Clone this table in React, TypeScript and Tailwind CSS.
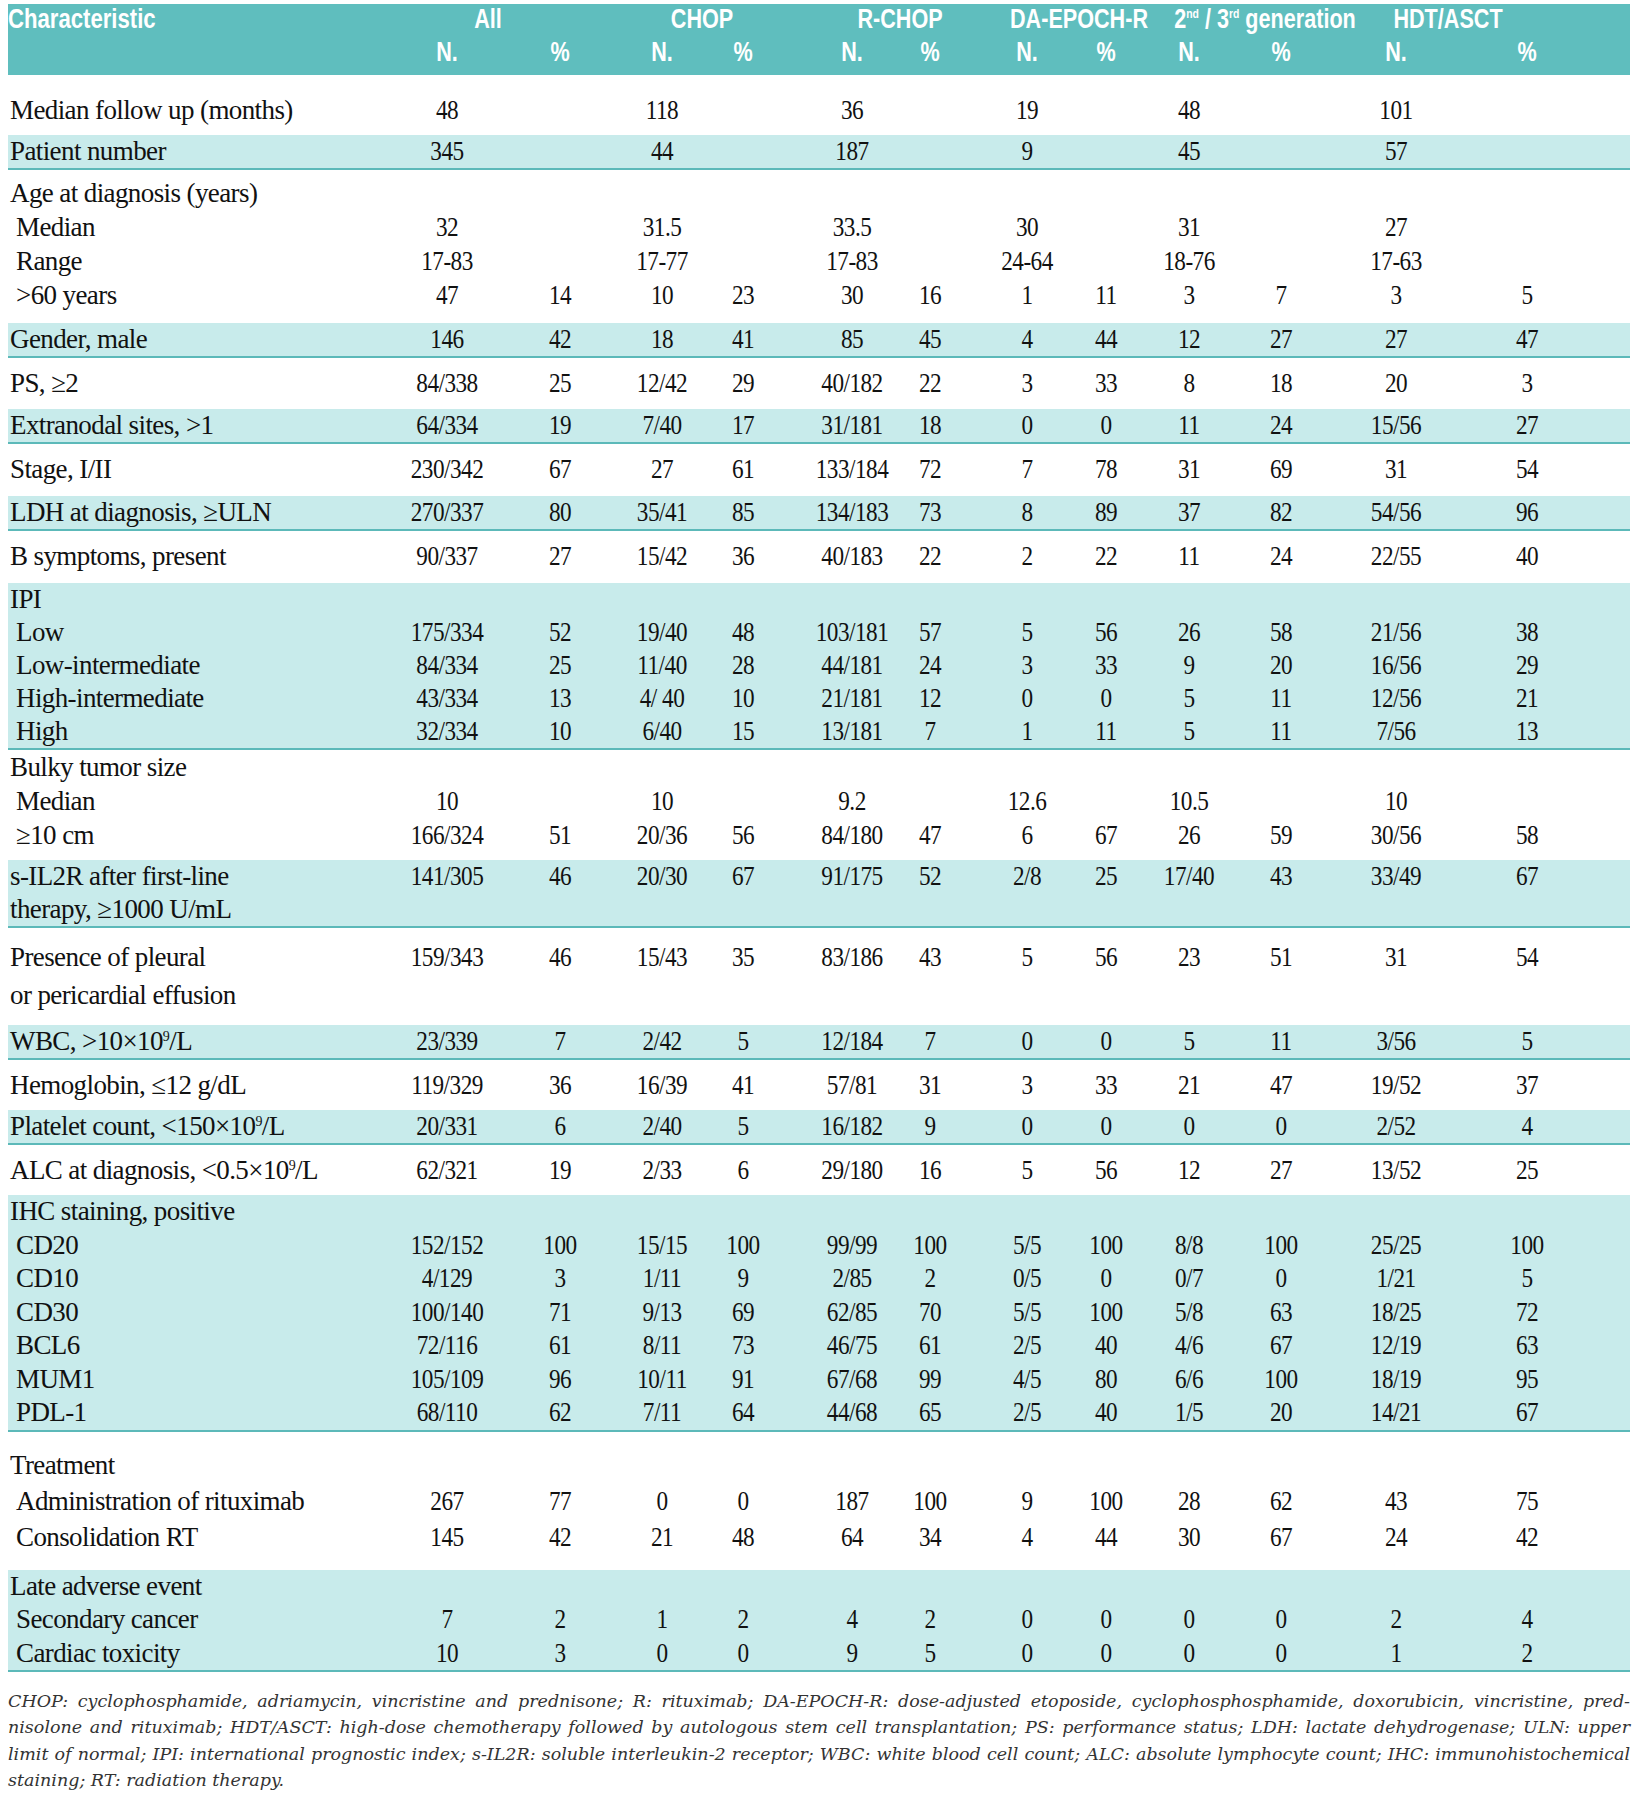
import React from 'react';

type Row = { label: React.ReactNode; sub?: boolean; values?: string[] };
type Group = { teal?: boolean; box: string; rows: Row[] };

// column left edges sit on the centre of each value column
const COLS =
  'grid grid-cols-[439px_113px_102px_81px_109px_78px_97px_79px_83px_92px_115px_131px_1fr]';

const E = ['', '', '', '', '', '', '', '', '', '', '', ''];

const Nine = () => <sup className="text-[14px] -top-[9px]">9</sup>;

const groups: Group[] = [
  { box: 'pt-[18px] pb-[8px] leading-[34px]', rows: [{ label: 'Median follow up (months)', values: ['48', '', '118', '', '36', '', '19', '', '48', '', '101', ''] }] },
  { teal: true, box: 'leading-[33px]', rows: [{ label: 'Patient number', values: ['345', '', '44', '', '187', '', '9', '', '45', '', '57', ''] }] },
  {
    box: 'pt-[6px] pb-[11px] leading-[34px]',
    rows: [
      { label: 'Age at diagnosis (years)' },
      { label: 'Median', sub: true, values: ['32', '', '31.5', '', '33.5', '', '30', '', '31', '', '27', ''] },
      { label: 'Range', sub: true, values: ['17-83', '', '17-77', '', '17-83', '', '24-64', '', '18-76', '', '17-63', ''] },
      { label: '>60 years', sub: true, values: ['47', '14', '10', '23', '30', '16', '1', '11', '3', '7', '3', '5'] },
    ],
  },
  { teal: true, box: 'leading-[33px]', rows: [{ label: 'Gender, male', values: ['146', '42', '18', '41', '85', '45', '4', '44', '12', '27', '27', '47'] }] },
  { box: 'py-[9px] leading-[33px]', rows: [{ label: 'PS, ≥2', values: ['84/338', '25', '12/42', '29', '40/182', '22', '3', '33', '8', '18', '20', '3'] }] },
  { teal: true, box: 'leading-[33px]', rows: [{ label: 'Extranodal sites, >1', values: ['64/334', '19', '7/40', '17', '31/181', '18', '0', '0', '11', '24', '15/56', '27'] }] },
  { box: 'pt-[9px] pb-[10px] leading-[33px]', rows: [{ label: 'Stage, I/II', values: ['230/342', '67', '27', '61', '133/184', '72', '7', '78', '31', '69', '31', '54'] }] },
  { teal: true, box: 'leading-[33px]', rows: [{ label: 'LDH at diagnosis, ≥ULN', values: ['270/337', '80', '35/41', '85', '134/183', '73', '8', '89', '37', '82', '54/56', '96'] }] },
  { box: 'pt-[9px] pb-[10px] leading-[33px]', rows: [{ label: 'B symptoms, present', values: ['90/337', '27', '15/42', '36', '40/183', '22', '2', '22', '11', '24', '22/55', '40'] }] },
  {
    teal: true,
    box: 'leading-[33px]',
    rows: [
      { label: 'IPI' },
      { label: 'Low', sub: true, values: ['175/334', '52', '19/40', '48', '103/181', '57', '5', '56', '26', '58', '21/56', '38'] },
      { label: 'Low-intermediate', sub: true, values: ['84/334', '25', '11/40', '28', '44/181', '24', '3', '33', '9', '20', '16/56', '29'] },
      { label: 'High-intermediate', sub: true, values: ['43/334', '13', '4/ 40', '10', '21/181', '12', '0', '0', '5', '11', '12/56', '21'] },
      { label: 'High', sub: true, values: ['32/334', '10', '6/40', '15', '13/181', '7', '1', '11', '5', '11', '7/56', '13'] },
    ],
  },
  {
    box: 'pb-[8px] leading-[34px]',
    rows: [
      { label: 'Bulky tumor size' },
      { label: 'Median', sub: true, values: ['10', '', '10', '', '9.2', '', '12.6', '', '10.5', '', '10', ''] },
      { label: '≥10 cm', sub: true, values: ['166/324', '51', '20/36', '56', '84/180', '47', '6', '67', '26', '59', '30/56', '58'] },
    ],
  },
  {
    teal: true,
    box: 'leading-[33px]',
    rows: [
      { label: 's-IL2R after first-line', values: ['141/305', '46', '20/30', '67', '91/175', '52', '2/8', '25', '17/40', '43', '33/49', '67'] },
      { label: 'therapy, ≥1000 U/mL' },
    ],
  },
  {
    box: 'pt-[10px] pb-[11px] leading-[38px]',
    rows: [
      { label: 'Presence of pleural', values: ['159/343', '46', '15/43', '35', '83/186', '43', '5', '56', '23', '51', '31', '54'] },
      { label: 'or pericardial effusion' },
    ],
  },
  { teal: true, box: 'leading-[33px]', rows: [{ label: <>WBC, &gt;10×10<Nine />/L</>, values: ['23/339', '7', '2/42', '5', '12/184', '7', '0', '0', '5', '11', '3/56', '5'] }] },
  { box: 'py-[8px] leading-[34px]', rows: [{ label: 'Hemoglobin, ≤12 g/dL', values: ['119/329', '36', '16/39', '41', '57/81', '31', '3', '33', '21', '47', '19/52', '37'] }] },
  { teal: true, box: 'leading-[33px]', rows: [{ label: <>Platelet count, &lt;150×10<Nine />/L</>, values: ['20/331', '6', '2/40', '5', '16/182', '9', '0', '0', '0', '0', '2/52', '4'] }] },
  { box: 'py-[8px] leading-[34px]', rows: [{ label: <>ALC at diagnosis, &lt;0.5×10<Nine />/L</>, values: ['62/321', '19', '2/33', '6', '29/180', '16', '5', '56', '12', '27', '13/52', '25'] }] },
  {
    teal: true,
    box: 'leading-[33.5px]',
    rows: [
      { label: 'IHC staining, positive' },
      { label: 'CD20', sub: true, values: ['152/152', '100', '15/15', '100', '99/99', '100', '5/5', '100', '8/8', '100', '25/25', '100'] },
      { label: 'CD10', sub: true, values: ['4/129', '3', '1/11', '9', '2/85', '2', '0/5', '0', '0/7', '0', '1/21', '5'] },
      { label: 'CD30', sub: true, values: ['100/140', '71', '9/13', '69', '62/85', '70', '5/5', '100', '5/8', '63', '18/25', '72'] },
      { label: 'BCL6', sub: true, values: ['72/116', '61', '8/11', '73', '46/75', '61', '2/5', '40', '4/6', '67', '12/19', '63'] },
      { label: 'MUM1', sub: true, values: ['105/109', '96', '10/11', '91', '67/68', '99', '4/5', '80', '6/6', '100', '18/19', '95'] },
      { label: 'PDL-1', sub: true, values: ['68/110', '62', '7/11', '64', '44/68', '65', '2/5', '40', '1/5', '20', '14/21', '67'] },
    ],
  },
  {
    box: 'py-[15px] leading-[36px]',
    rows: [
      { label: 'Treatment' },
      { label: 'Administration of rituximab', sub: true, values: ['267', '77', '0', '0', '187', '100', '9', '100', '28', '62', '43', '75'] },
      { label: 'Consolidation RT', sub: true, values: ['145', '42', '21', '48', '64', '34', '4', '44', '30', '67', '24', '42'] },
    ],
  },
  {
    teal: true,
    box: 'leading-[33.5px]',
    rows: [
      { label: 'Late adverse event' },
      { label: 'Secondary cancer', sub: true, values: ['7', '2', '1', '2', '4', '2', '0', '0', '0', '0', '2', '4'] },
      { label: 'Cardiac toxicity', sub: true, values: ['10', '3', '0', '0', '9', '5', '0', '0', '0', '0', '1', '2'] },
    ],
  },
];

const footnote = [
  'CHOP: cyclophosphamide, adriamycin, vincristine and prednisone; R: rituximab; DA-EPOCH-R: dose-adjusted etoposide, cyclophosphosphamide, doxorubicin, vincristine, pred-',
  'nisolone and rituximab; HDT/ASCT: high-dose chemotherapy followed by autologous stem cell transplantation; PS: performance status; LDH: lactate dehydrogenase; ULN: upper',
  'limit of normal; IPI: international prognostic index; s-IL2R: soluble interleukin-2 receptor; WBC: white blood cell count; ALC: absolute lymphocyte count; IHC: immunohistochemical',
];

function Cell({ children }: { children: React.ReactNode }) {
  return (
    <div>
      <span className="inline-block -translate-x-1/2 scale-x-[0.86] whitespace-nowrap">{children}</span>
    </div>
  );
}

function HeadCell({ children }: { children: React.ReactNode }) {
  return (
    <div>
      <span className="inline-block -translate-x-1/2 scale-x-[0.8] whitespace-nowrap">{children}</span>
    </div>
  );
}

function GroupLabel({ offset, children }: { offset: string; children: React.ReactNode }) {
  return (
    <div className="col-span-2">
      <span className={`inline-block -translate-x-1/2 scale-x-[0.8] whitespace-nowrap ${offset}`}>{children}</span>
    </div>
  );
}

export default function App() {
  return (
    <div className="w-[1638px] min-h-[1800px] bg-white px-[8px] pt-[4px] text-[#111]">
      {/* Header */}
      <div className="bg-[#5fbebe] pb-[5px] text-white font-bold text-[27px] font-['Liberation_Sans',sans-serif]">
        <div className={`${COLS} h-[34px] items-center leading-none`}>
          <div>
            <span className="inline-block origin-left scale-x-[0.82] whitespace-nowrap">Characteristic</span>
          </div>
          <GroupLabel offset="ml-[41px]">All</GroupLabel>
          <GroupLabel offset="ml-[40px]">CHOP</GroupLabel>
          <GroupLabel offset="ml-[48px]">R-CHOP</GroupLabel>
          <GroupLabel offset="ml-[52px]">DA-EPOCH-R</GroupLabel>
          <GroupLabel offset="ml-[76px]">
            2<sup className="text-[13px] -top-[10px]">nd</sup> / 3<sup className="text-[13px] -top-[10px]">rd</sup> generation
          </GroupLabel>
          <GroupLabel offset="ml-[52px]">HDT/ASCT</GroupLabel>
          <div />
        </div>
        <div className={`${COLS} h-[32px] items-center leading-none`}>
          <div />
          {['N.', '%', 'N.', '%', 'N.', '%', 'N.', '%', 'N.', '%', 'N.', '%'].map((h, i) => (
            <HeadCell key={i}>{h}</HeadCell>
          ))}
          <div />
        </div>
      </div>

      {/* Body */}
      <div className="font-['Liberation_Serif',serif] text-[27px] tracking-[-0.6px]">
        {groups.map((g, gi) => (
          <div
            key={gi}
            className={g.teal ? `bg-[#c8ebeb] border-b-2 border-[#5cb9b9] ${g.box}` : g.box}
          >
            {g.rows.map((r, ri) => (
              <div key={ri} className={COLS}>
                <div className={`whitespace-nowrap ${r.sub ? 'pl-[8px]' : 'pl-[2px]'}`}>{r.label}</div>
                {(r.values ?? E).map((v, vi) => (
                  <Cell key={vi}>{v}</Cell>
                ))}
                <div />
              </div>
            ))}
          </div>
        ))}
      </div>

      {/* Footnote */}
      <div className="mt-[16px] font-['DejaVu_Serif',serif] italic text-[17.5px] leading-[26.3px] text-[#333]">
        {footnote.map((line, i) => (
          <div key={i} className="text-justify [text-align-last:justify]">
            {line}
          </div>
        ))}
        <div>staining; RT: radiation therapy.</div>
      </div>
    </div>
  );
}
